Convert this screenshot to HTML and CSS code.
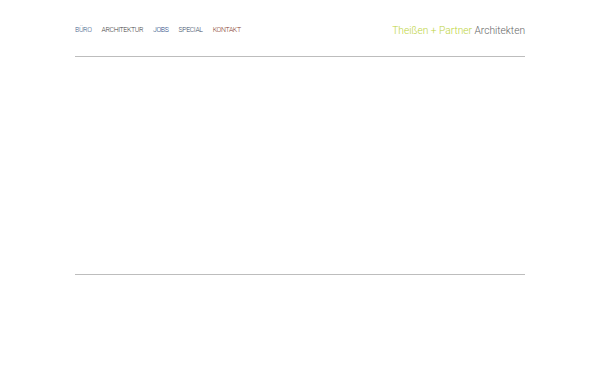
FILE: index.html
```html
<!DOCTYPE html>
<html lang="de">
<head>
  <meta charset="UTF-8">
  <title>Theißen + Partner Architekten</title>
  <link rel="stylesheet" href="styles.css">
</head>
<body>
  <div class="page">
    <header class="header">
      <nav class="nav">
        <a href="#" class="nav-buero">Büro</a>
        <a href="#" class="nav-arch">Architektur</a>
        <a href="#" class="nav-jobs">Jobs</a>
        <a href="#" class="nav-special">Special</a>
        <a href="#" class="nav-kontakt">Kontakt</a>
      </nav>
      <div class="logo"><span class="logo-name">Theißen + Partner</span> Architekten</div>
    </header>
    <div class="stage"></div>
  </div>
</body>
</html>
```

FILE: styles.css
```css
body {
  margin: 0;
  background: #fff;
  font-family: Roboto, "Liberation Sans", sans-serif;
}
.page {
  width: 450px;
  margin: 0 auto;
}
.header {
  display: flex;
  justify-content: space-between;
  align-items: center;
  height: 57px;
  padding-top: 4px;
  box-sizing: border-box;
  border-bottom: 1px solid #bdbdbd;
}
.nav {
  display: flex;
  gap: 10px;
}
.nav a {
  font-size: 7px;
  font-weight: 300;
  letter-spacing: -0.4px;
  text-transform: uppercase;
  text-decoration: none;
}
.nav-buero { color: #3f5f8c; }
.nav-arch { color: #444; }
.nav-jobs { color: #24477f; }
.nav-special { color: #3d4f68; }
.nav-kontakt { color: #86402e; }
.logo {
  font-size: 10.2px;
  font-weight: 300;
  color: #666;
}
.logo-name {
  color: #bcd33c;
}
.stage {
  height: 217px;
  border-bottom: 1px solid #bdbdbd;
}
```
